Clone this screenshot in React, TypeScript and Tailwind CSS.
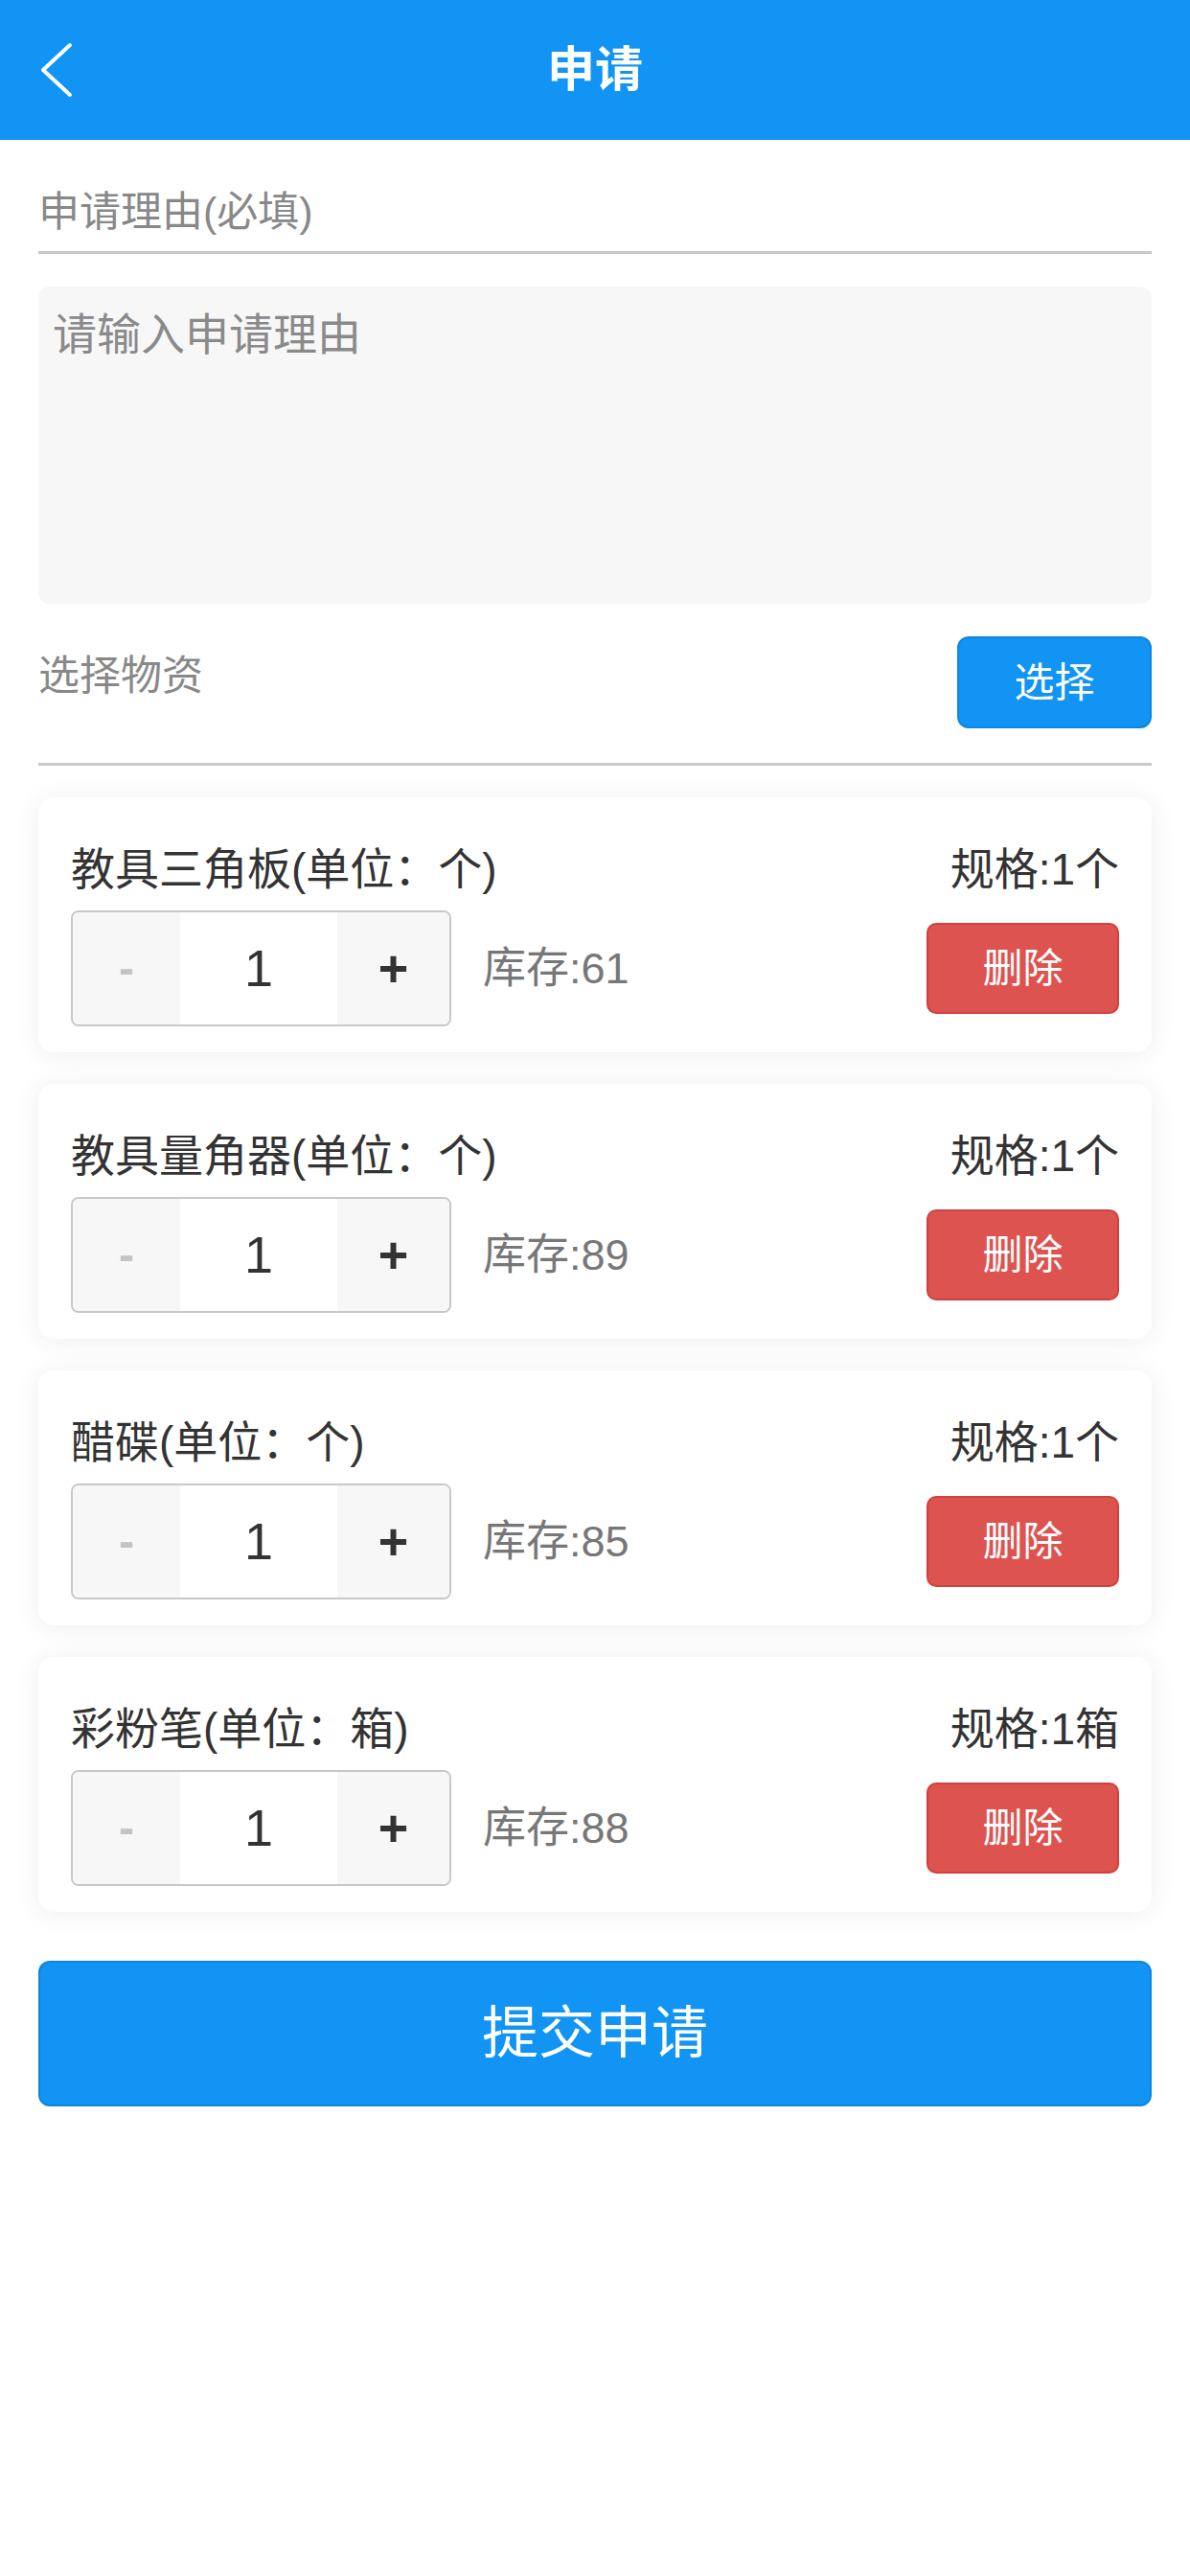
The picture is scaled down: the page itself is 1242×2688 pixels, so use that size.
import React from "react";

type Item = { name: string; spec: string; stock: number };

const items: Item[] = [
  { name: "教具三角板(单位：个)", spec: "规格:1个", stock: 61 },
  { name: "教具量角器(单位：个)", spec: "规格:1个", stock: 89 },
  { name: "醋碟(单位：个)", spec: "规格:1个", stock: 85 },
  { name: "彩粉笔(单位：箱)", spec: "规格:1箱", stock: 88 },
];

function Card({ item }: { item: Item }) {
  return (
    <div className="mt-[33px] h-[266px] rounded-[16px] bg-white px-[34px] pt-[47px] shadow-[0_2px_28px_rgba(0,0,0,0.07)]">
      <div className="flex h-[56px] items-center justify-between text-[46px] leading-[56px] text-[#333]">
        <span>{item.name}</span>
        <span>{item.spec}</span>
      </div>
      <div className="mt-[15px] flex h-[121px] items-center">
        <div className="flex h-[121px] w-[397px] overflow-hidden rounded-[8px] border-2 border-[#c8c8c8]">
          <div className="flex w-[112px] items-center justify-center bg-[#f7f7f7] text-[48px] font-bold text-[#c4c4c4]">-</div>
          <div className="flex w-[164px] items-center justify-center bg-white text-[54px] text-[#333]">1</div>
          <div className="flex flex-1 items-center justify-center bg-[#f7f7f7] text-[54px] font-bold text-[#333]">+</div>
        </div>
        <span className="ml-[33px] text-[45px] text-[#777]">库存:{item.stock}</span>
        <button className="ml-auto flex h-[95px] w-[201px] items-center justify-center rounded-[10px] border-2 border-[#cf423e] bg-[#dd5350] text-[42px] text-white">
          删除
        </button>
      </div>
    </div>
  );
}

export default function App() {
  return (
    <div className="min-h-[2688px] w-[1242px] bg-white font-['Liberation_Sans','Noto_Sans_CJK_SC',sans-serif]">
      <header className="grid h-[146px] grid-cols-[1fr_auto_1fr] items-center bg-[#1194f3] px-[42px]">
        <svg width="34" height="58" viewBox="0 0 34 58" fill="none">
          <path d="M31 3 L3 29 L31 55" stroke="white" strokeWidth="4" strokeLinecap="round" strokeLinejoin="round" />
        </svg>
        <h1 className="text-[50px] font-bold leading-[60px] text-white">申请</h1>
        <div />
      </header>
      <main className="px-[40px]">
        <div className="mt-[45px] border-b-[3px] border-[#c8c8c8] pb-[11px] text-[43px] leading-[60px] text-[#888]">
          申请理由(必填)
        </div>
        <textarea
          className="mt-[34px] block h-[331px] w-full resize-none rounded-[12px] bg-[#f7f7f7] px-[15px] pt-[20px] text-[46px] leading-[60px] text-[#333] outline-none placeholder:text-[#8a8a8a]"
          placeholder="请输入申请理由"
        />
        <div className="mt-[34px] flex items-center justify-between">
          <span className="mb-[14px] text-[43px] leading-[60px] text-[#888]">选择物资</span>
          <button className="flex h-[96px] w-[203px] items-center justify-center rounded-[12px] border-2 border-[#0d86e0] bg-[#1194f3] text-[42px] text-white">
            选择
          </button>
        </div>
        <div className="mt-[36px] h-[3px] bg-[#c8c8c8]" />
        {items.map((it) => (
          <Card key={it.name} item={it} />
        ))}
        <button className="mt-[51px] flex h-[152px] w-full items-center justify-center rounded-[12px] border-2 border-[#0d86e0] bg-[#1194f3] text-[59px] text-white">
          提交申请
        </button>
      </main>
    </div>
  );
}
